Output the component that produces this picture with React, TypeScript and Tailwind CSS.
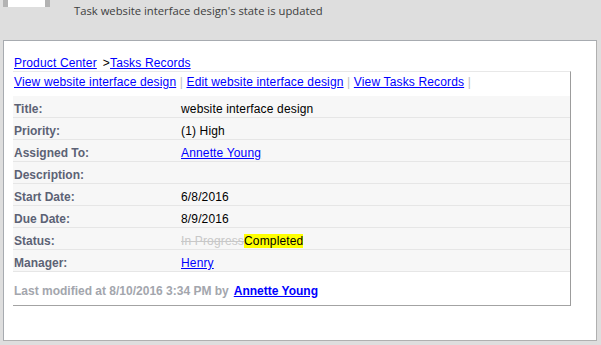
import React from "react";

const rows: { label: string; value: React.ReactNode }[] = [
  { label: "Title:", value: "website interface design" },
  { label: "Priority:", value: "(1) High" },
  {
    label: "Assigned To:",
    value: (
      <a href="#" className="text-[#0000ff] underline">
        Annette Young
      </a>
    ),
  },
  { label: "Description:", value: "" },
  { label: "Start Date:", value: "6/8/2016" },
  { label: "Due Date:", value: "8/9/2016" },
  {
    label: "Status:",
    value: (
      <span>
        <span className="text-[#c8c8c8] line-through">In Progress</span>
        <span className="bg-[#ffff00] text-black">Completed</span>
      </span>
    ),
  },
  {
    label: "Manager:",
    value: (
      <a href="#" className="text-[#0000ff] underline">
        Henry
      </a>
    ),
  },
];

export default function App() {
  return (
    <div
      className="w-[601px] h-[345px] bg-[#dedede] overflow-hidden flex flex-col"
      style={{ fontFamily: '"Liberation Sans", Arial, sans-serif' }}
    >
      <div className="h-[40px] flex items-start shrink-0">
        <div className="ml-[3px] w-[47px] h-[7px] bg-white border-x-[5px] border-[#b3b3b3]" />
        <div
          className="ml-[24px] mt-[3px] text-[11.25px] leading-[16px] text-[#3d3d3d]"
          style={{ fontFamily: '"Open Sans", "Noto Sans", sans-serif' }}
        >
          Task website interface design's state is updated
        </div>
      </div>
      <div className="ml-[3px] w-[594px] h-[301px] bg-white border border-[#a7abb0] border-b-[#b0b0b0] border-r-[#b0b0b0] text-[12px] leading-[15px] tracking-[0.15px]">
        <div className="pl-[10px] pt-[15px] h-[30px] text-[#0000ff] flex">
          <a href="#" className="underline">
            Product Center
          </a>
          <span className="ml-[6px] text-black">&gt;</span>
          <a href="#" className="underline">
            Tasks Records
          </a>
        </div>
        <div className="ml-[9px] w-[558px] border-t border-t-[#e8e8e8] border-r border-r-[#9c9c9c] border-b border-b-[#a3a3a3]">
          <div className="h-[24px] pt-[3px] pl-[1px]">
            <a href="#" className="text-[#0000ff] underline">
              View website interface design
            </a>
            <span className="text-[#c0c0c0]"> | </span>
            <a href="#" className="text-[#0000ff] underline">
              Edit website interface design
            </a>
            <span className="text-[#c0c0c0]"> | </span>
            <a href="#" className="text-[#0000ff] underline">
              View Tasks Records
            </a>
            <span className="text-[#c0c0c0]"> |</span>
          </div>
          {rows.map((r) => (
            <div
              key={r.label}
              className="h-[22px] flex bg-[#f7f7f7] border-b border-[#e6e6e6]"
            >
              <div className="w-[168px] pl-[1px] pt-[6px] font-bold tracking-normal text-[#5c6275] shrink-0">
                {r.label}
              </div>
              <div className="pt-[6px] text-black">{r.value}</div>
            </div>
          ))}
          <div className="h-[33px] pt-[12px] pl-[1px] font-bold tracking-normal flex">
            <span className="text-[#a3a6ad]">
              Last modified at 8/10/2016 3:34 PM by
            </span>
            <a href="#" className="ml-[5px] text-[#0000ff] underline">
              Annette Young
            </a>
          </div>
        </div>
      </div>
    </div>
  );
}
